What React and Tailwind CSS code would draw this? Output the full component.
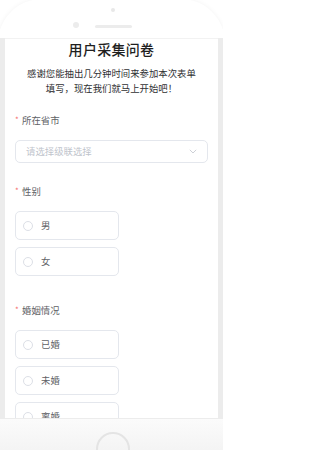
import React from 'react';

const FONT = { fontFamily: '"Noto Sans CJK SC", "Noto Sans", sans-serif' };

function Label({ text }) {
  return (
    <div className="flex items-center h-[14px] pl-[10px] text-[9.4px] leading-[14px] text-[#606266]">
      <span className="text-[#f56c6c] w-[7px] text-[8px]">*</span>
      <span>{text}</span>
    </div>
  );
}

function RadioBox({ text }) {
  return (
    <div className="flex items-center w-[104px] h-[29px] ml-[10px] border border-[#e4e7ed] rounded-[5px] bg-white">
      <span className="ml-[7px] w-[10px] h-[10px] rounded-full border border-[#dcdfe6]"></span>
      <span className="ml-[8px] text-[9.4px] text-[#606266]">{text}</span>
    </div>
  );
}

export default function App() {
  return (
    <div className="relative w-[223px] h-[450px] overflow-hidden bg-white" style={FONT}>
      {/* phone body */}
      <div className="absolute -left-[2px] -top-[1px] w-[227px] h-[480px] rounded-[44px] shadow-[0_0_5px_rgba(0,0,0,0.05)] bg-white"></div>

      <div className="relative flex flex-col">
        {/* top bezel */}
        <div className="relative h-[38px]">
          <span className="absolute left-[111px] top-[8px] w-[4px] h-[4px] rounded-full bg-[#e8e8e8]"></span>
          <span className="absolute left-[73px] top-[22px] w-[6px] h-[6px] rounded-full bg-[#ececec]"></span>
          <span className="absolute left-[95px] top-[25px] w-[37px] h-[3px] rounded-full bg-[#ececec]"></span>
        </div>

        {/* screen row */}
        <div className="flex h-[380px]">
          <div className="w-[5px] bg-[#ececec]"></div>
          <div className="w-[213px] overflow-hidden bg-white border-t border-[#f2f2f2]">
            <h1 className="text-center text-[14px] leading-[20px] font-medium text-[#1f1f1f] tracking-[0.3px]">
              用户采集问卷
            </h1>
            <p className="mx-auto mt-[7px] w-[172px] text-center text-[9.4px] leading-[15px] text-[#303133]">
              感谢您能抽出几分钟时间来参加本次表单填写，现在我们就马上开始吧！
            </p>

            <div className="mt-[17px]">
              <Label text="所在省市" />
              <div className="mt-[13px] mx-[10px] h-[23px] border border-[#e4e7ed] rounded-[5px] flex items-center justify-between px-[10px]">
                <span className="text-[9.4px] text-[#c0c4cc]">请选择级联选择</span>
                <svg width="8" height="5" viewBox="0 0 8 5" fill="none">
                  <path d="M0.8 0.8 L4 4 L7.2 0.8" stroke="#c0c4cc" strokeWidth="0.8" />
                </svg>
              </div>
            </div>

            <div className="mt-[21px]">
              <Label text="性别" />
              <div className="mt-[13px] flex flex-col gap-[7px]">
                <RadioBox text="男" />
                <RadioBox text="女" />
              </div>
            </div>

            <div className="mt-[27px]">
              <Label text="婚姻情况" />
              <div className="mt-[13px] flex flex-col gap-[7px]">
                <RadioBox text="已婚" />
                <RadioBox text="未婚" />
                <RadioBox text="离婚" />
              </div>
            </div>
          </div>
          <div className="w-[5px] bg-[#ececec]"></div>
        </div>

        {/* bottom bezel */}
        <div className="relative h-[40px] bg-gradient-to-b from-[#fbfbfb] to-[#f2f2f2] border-t border-[#ececec]">
          <span className="absolute left-[96px] top-[13px] w-[34px] h-[34px] rounded-full border-[2.5px] border-[#e4e4e4]"></span>
        </div>
      </div>
    </div>
  );
}
